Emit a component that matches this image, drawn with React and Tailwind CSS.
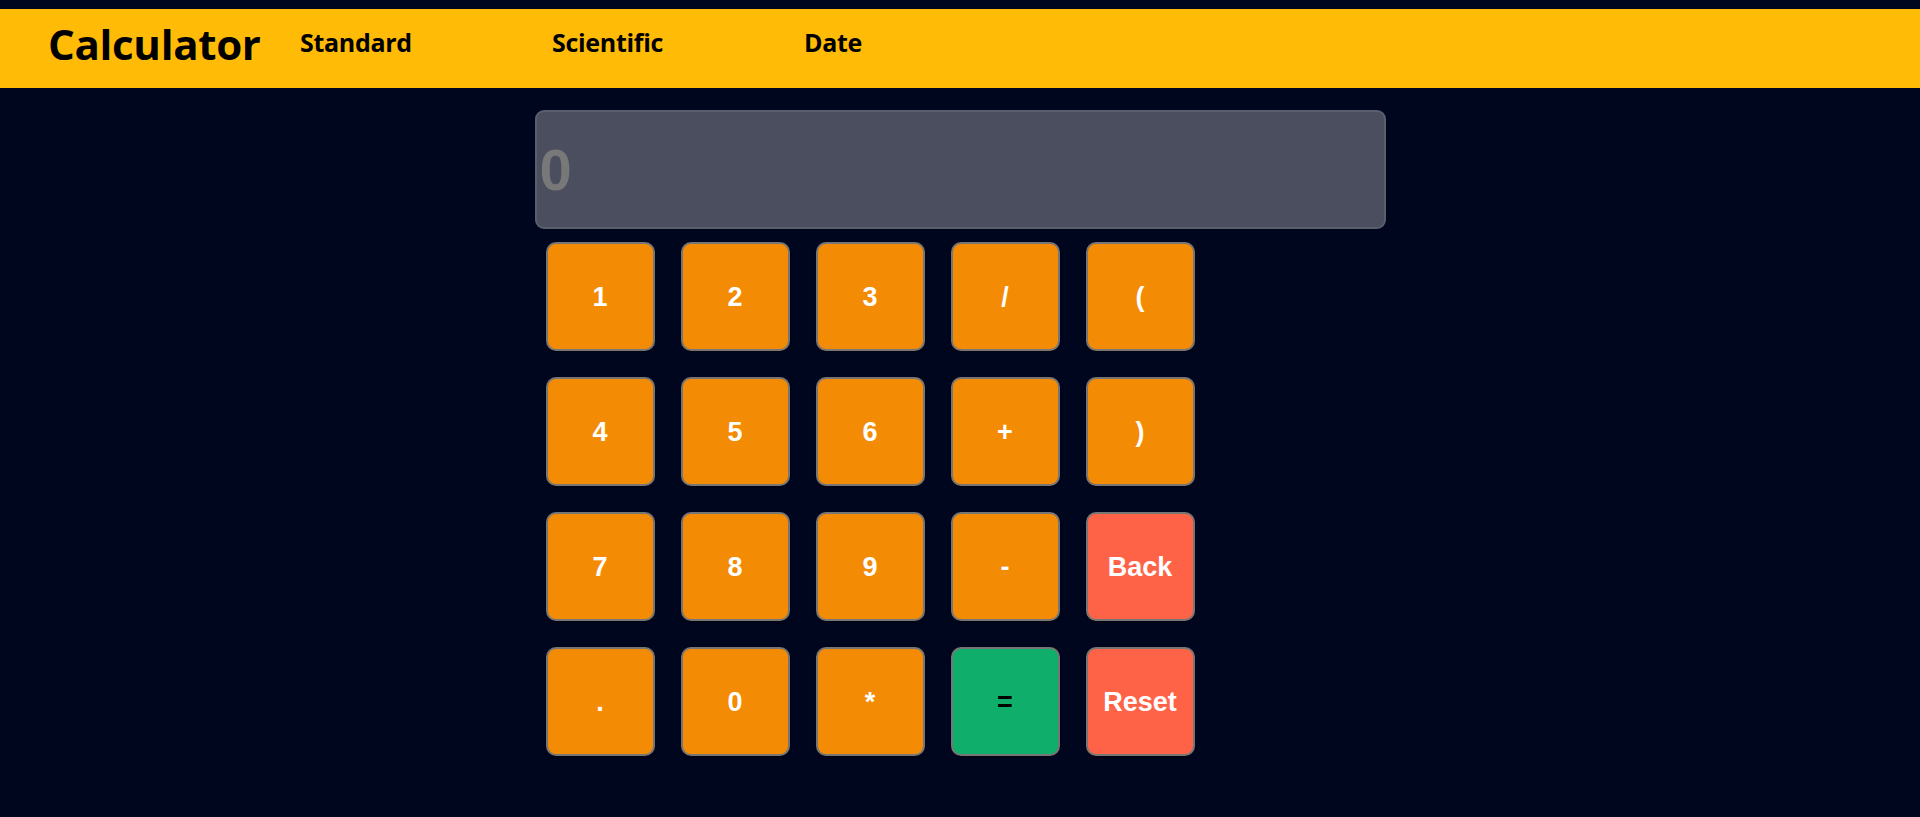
import React from "react";

const keys = [
  ["1", "o"], ["2", "o"], ["3", "o"], ["/", "o"], ["(", "o"],
  ["4", "o"], ["5", "o"], ["6", "o"], ["+", "o"], [")", "o"],
  ["7", "o"], ["8", "o"], ["9", "o"], ["-", "o"], ["Back", "r"],
  [".", "o"], ["0", "o"], ["*", "o"], ["=", "g"], ["Reset", "r"],
];

const colors = {
  o: "bg-[#f38b04] text-white",
  r: "bg-[#ff6347] text-white",
  g: "bg-[#0fae6b] text-black",
};

export default function App() {
  return (
    <div className="min-h-screen bg-[#00061e] pt-[9px]">
      <header
        className="flex h-[79px] bg-[#ffbb05] pl-[48px] text-black"
        style={{ fontFamily: '"Open Sans", "Noto Sans", sans-serif' }}
      >
        <h1 className="mt-[14px] w-[252px] text-[42px] font-bold leading-none tracking-[-0.3px]">
          Calculator
        </h1>
        <nav className="flex">
          {["Standard", "Scientific", "Date"].map((t) => (
            <a
              key={t}
              className="mt-[21px] w-[252px] text-[25px] font-bold leading-none tracking-[-0.3px]"
            >
              {t}
            </a>
          ))}
        </nav>
      </header>

      <main
        className="mx-auto w-[851px]"
        style={{ fontFamily: '"Liberation Sans", Arial, sans-serif' }}
      >
        <div className="mt-[22px] flex h-[119px] items-center rounded-[9px] border-2 border-[#5b5e6d] bg-[#4a4e5e] pl-[3px]">
          <span className="text-[58px] font-bold leading-none text-[#787878]">0</span>
        </div>
        <div className="mt-[13px] grid grid-cols-[repeat(5,109px)] gap-[26px] pl-[11px]">
          {keys.map(([k, c]) => (
            <button
              key={k}
              className={`flex h-[109px] w-[109px] items-center justify-center rounded-[10px] border-2 border-[#767676] pt-[2px] text-[27px] font-bold shadow-[0_1px_2px_rgba(0,0,0,0.6)] ${colors[c]}`}
            >
              {k}
            </button>
          ))}
        </div>
      </main>
    </div>
  );
}
